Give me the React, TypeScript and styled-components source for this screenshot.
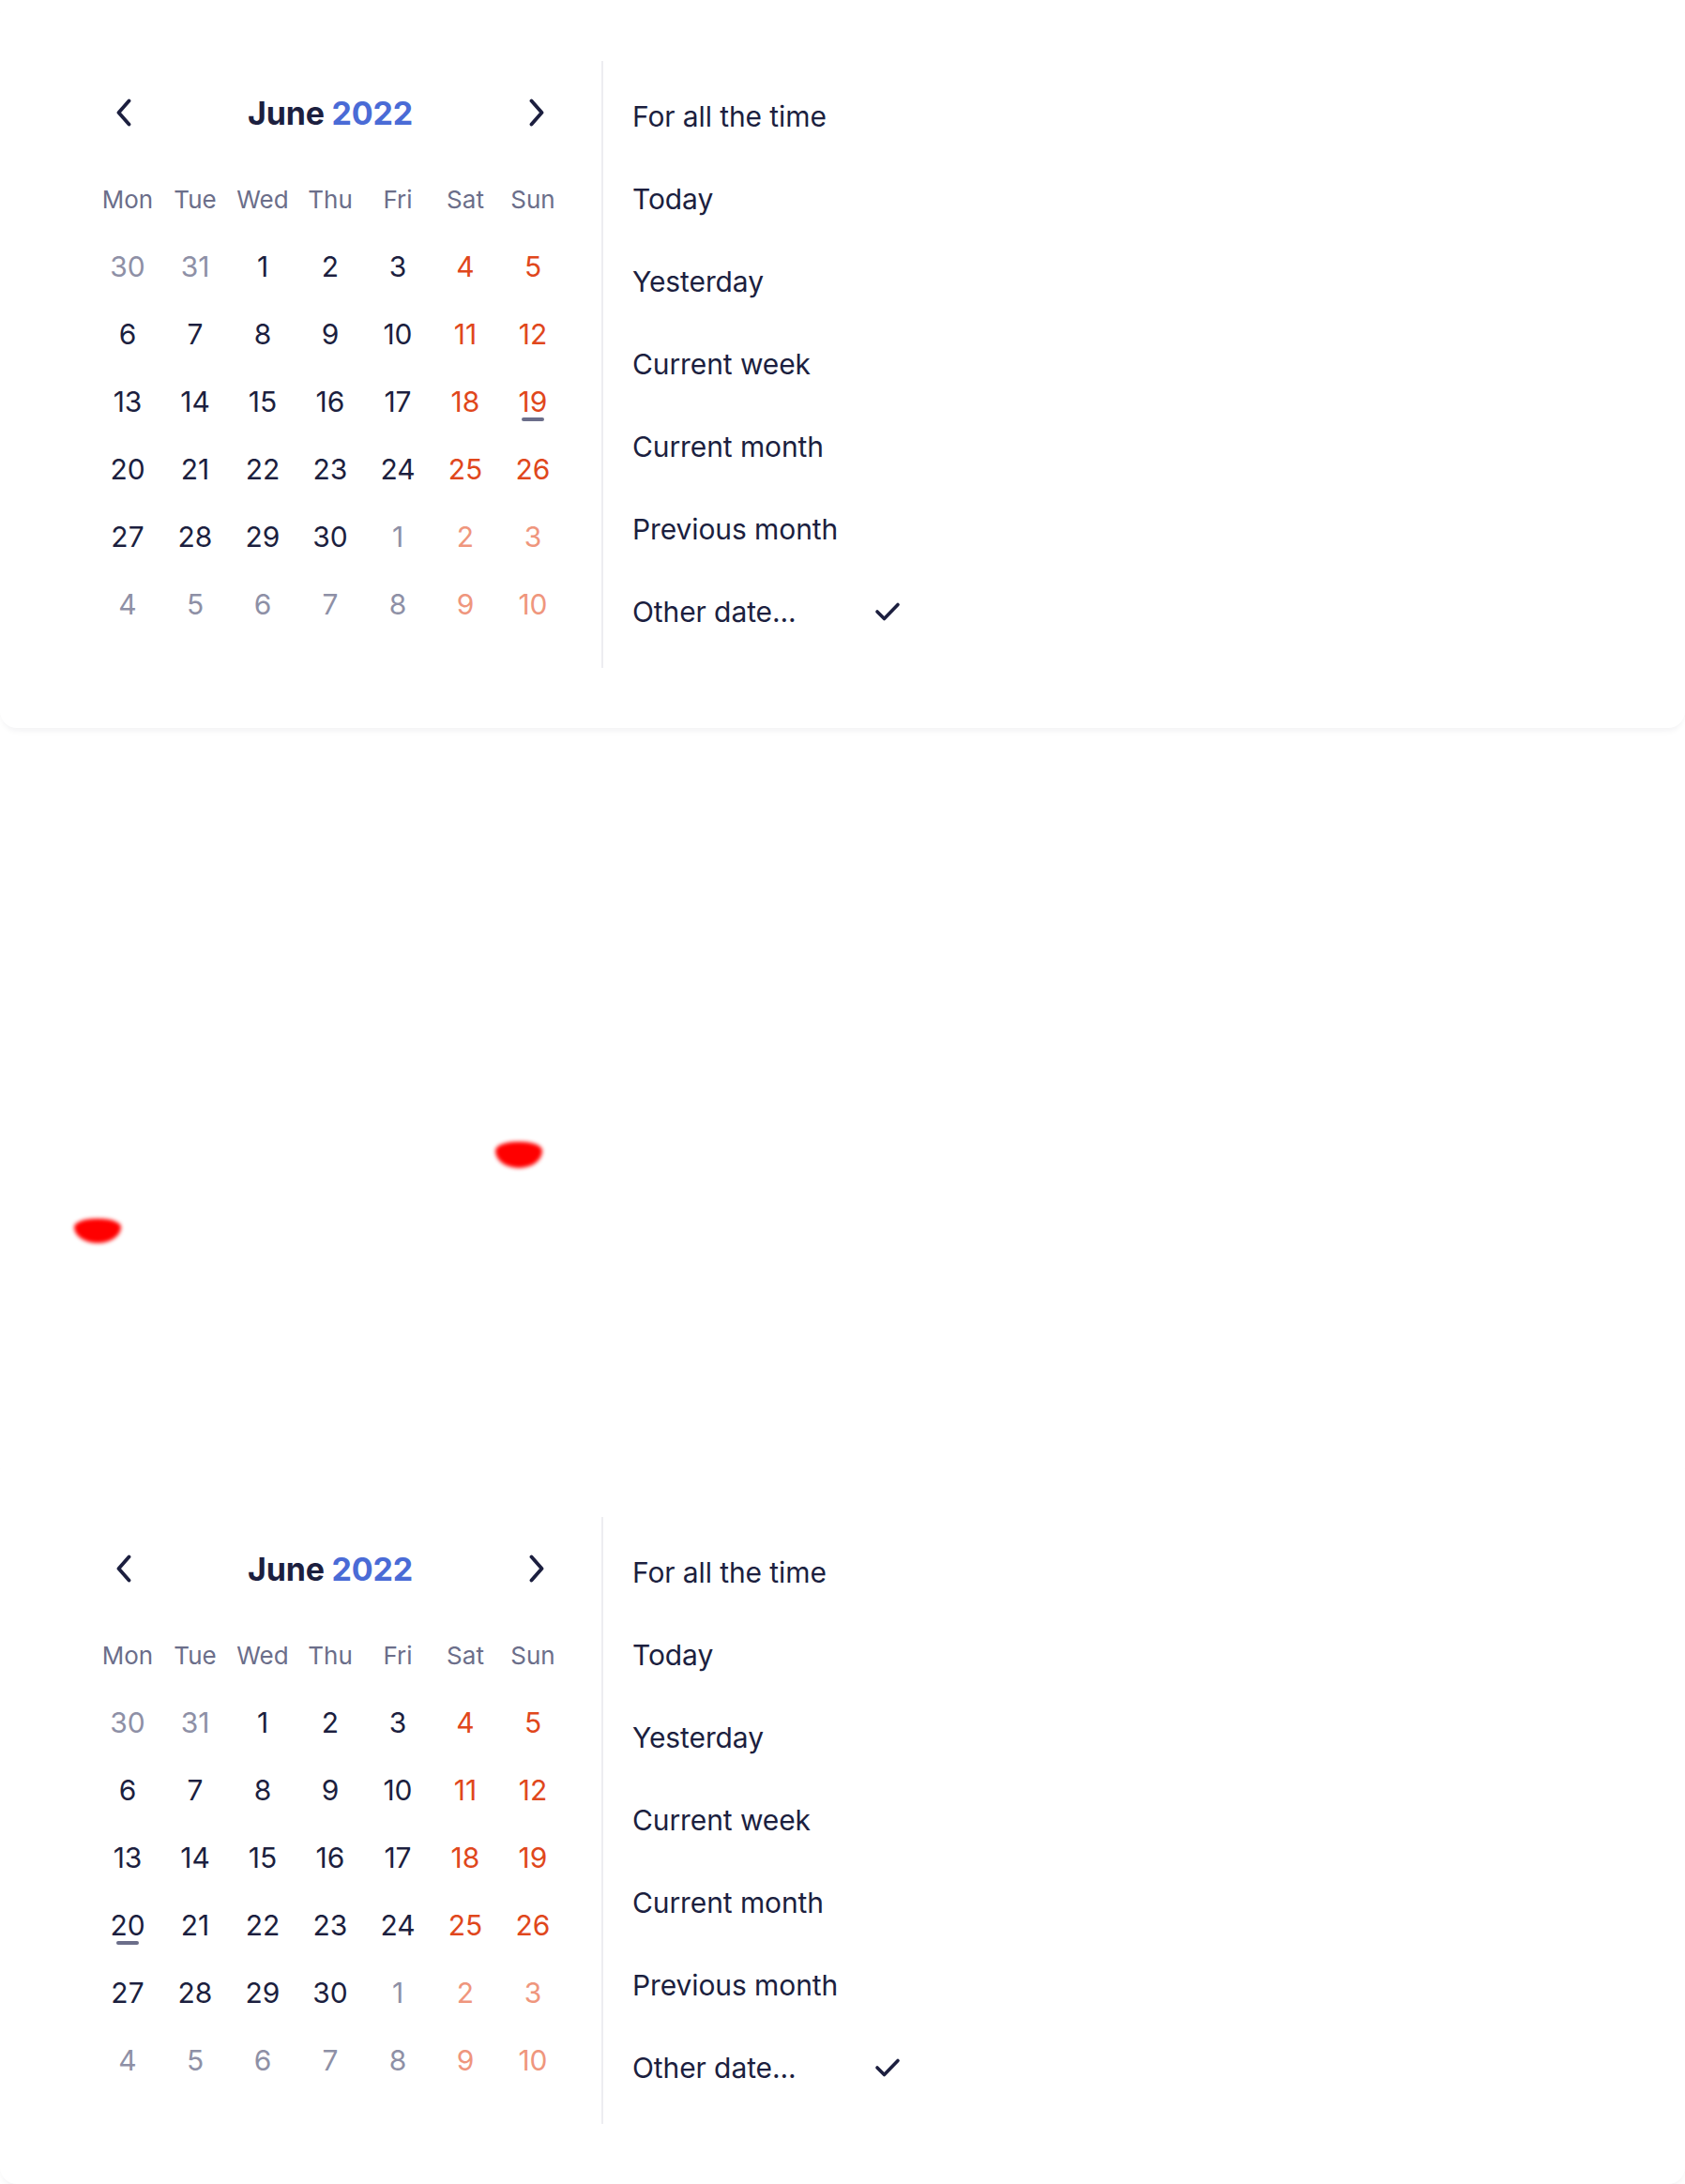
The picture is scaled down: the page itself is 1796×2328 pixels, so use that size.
import React from "react";
import styled, { createGlobalStyle } from "styled-components";

const Global = createGlobalStyle`
  html, body { margin: 0; padding: 0; background: #ffffff; }
  body { font-family: "Inter", "Noto Sans", sans-serif; -webkit-font-smoothing: antialiased; }
  * { box-sizing: border-box; }
`;

const Page = styled.div`
  width: 1796px;
  display: flex;
  flex-direction: column;
`;

const Card = styled.section`
  height: 776px;
  width: 100%;
  background: #ffffff;
  border-radius: 18px;
  box-shadow: 0 5px 7px -3px rgba(30, 30, 50, 0.07);
  display: flex;
  align-items: flex-start;
  padding-left: 100px;
`;

const Calendar = styled.div`
  margin-top: 84px;
  width: 504px;
  display: flex;
  flex-direction: column;
`;

const Header = styled.div`
  height: 72px;
  display: flex;
  align-items: center;
  justify-content: space-between;
  padding: 0 22px 0 22px;
  margin-bottom: 20px;
`;

const NavButton = styled.button`
  border: 0;
  background: transparent;
  padding: 0;
  width: 20px;
  height: 30px;
  display: flex;
  align-items: center;
  justify-content: center;
  cursor: pointer;
`;

const Title = styled.div`
  font-size: 34px;
  font-weight: 700;
  color: #1c1f3f;
  letter-spacing: -0.2px;
`;

const Year = styled.span`
  color: #4a6bd6;
`;

const Grid = styled.div`
  display: grid;
  grid-template-columns: repeat(7, 72px);
  grid-auto-rows: 72px;
`;

const WeekDay = styled.div`
  display: flex;
  align-items: center;
  justify-content: center;
  font-size: 26px;
  color: #6b6e8a;
`;

type Tone = "normal" | "muted" | "weekend" | "mutedWeekend";

const toneColor: Record<Tone, string> = {
  normal: "#1c1f3f",
  muted: "#8e90a6",
  weekend: "#e0471c",
  mutedWeekend: "#ef967d",
};

const Day = styled.div<{ $tone: Tone }>`
  position: relative;
  display: flex;
  align-items: center;
  justify-content: center;
  font-size: 30px;
  color: ${(p) => toneColor[p.$tone]};
`;

const TodayMark = styled.span`
  position: absolute;
  left: 50%;
  top: 53px;
  width: 24px;
  height: 4px;
  margin-left: -12px;
  border-radius: 2px;
  background: #6b6e8a;
`;

const Presets = styled.div`
  margin-left: 37px;
  margin-top: 65px;
  height: 647px;
  border-left: 2px solid #ededf1;
  padding: 15px 0 16px 31px;
  display: flex;
  flex-direction: column;
`;

const Preset = styled.div`
  height: 88px;
  width: 286px;
  display: flex;
  align-items: center;
  justify-content: space-between;
  font-size: 30px;
  color: #1c1f3f;
  letter-spacing: -0.1px;
`;

const Gap = styled.div`
  position: relative;
  height: 776px;
`;

const Blob = styled.div<{ $x: number; $y: number; $w: number; $h: number }>`
  position: absolute;
  left: ${(p) => p.$x}px;
  top: ${(p) => p.$y}px;
  width: ${(p) => p.$w}px;
  height: ${(p) => p.$h}px;
  background: #ff0000;
  border-radius: 45% 45% 50% 50% / 35% 35% 65% 65%;
  filter: blur(2px);
`;

const ChevronLeft = () => (
  <svg width="20" height="30" viewBox="0 0 20 30" fill="none">
    <path d="M15.5 2.5 L4.5 15 L15.5 27.5" stroke="#1c1f3f" strokeWidth="3.8" strokeLinecap="round" strokeLinejoin="round" />
  </svg>
);

const ChevronRight = () => (
  <svg width="20" height="30" viewBox="0 0 20 30" fill="none">
    <path d="M4.5 2.5 L15.5 15 L4.5 27.5" stroke="#1c1f3f" strokeWidth="3.8" strokeLinecap="round" strokeLinejoin="round" />
  </svg>
);

const Check = () => (
  <svg width="28" height="22" viewBox="0 0 28 22" fill="none">
    <path d="M3 11 L10.5 18.5 L25 3.5" stroke="#1c1f3f" strokeWidth="3.6" strokeLinecap="round" strokeLinejoin="round" />
  </svg>
);

const weekDays = ["Mon", "Tue", "Wed", "Thu", "Fri", "Sat", "Sun"];

const weeks: number[][] = [
  [30, 31, 1, 2, 3, 4, 5],
  [6, 7, 8, 9, 10, 11, 12],
  [13, 14, 15, 16, 17, 18, 19],
  [20, 21, 22, 23, 24, 25, 26],
  [27, 28, 29, 30, 1, 2, 3],
  [4, 5, 6, 7, 8, 9, 10],
];

const isOther = (r: number, c: number) =>
  (r === 0 && c < 2) || (r === 4 && c >= 4) || r === 5;

const presets = [
  "For all the time",
  "Today",
  "Yesterday",
  "Current week",
  "Current month",
  "Previous month",
  "Other date...",
];

const Picker: React.FC<{ today: number }> = ({ today }) => (
  <Card>
    <Calendar>
      <Header>
        <NavButton aria-label="Previous month">
          <ChevronLeft />
        </NavButton>
        <Title>
          June <Year>2022</Year>
        </Title>
        <NavButton aria-label="Next month">
          <ChevronRight />
        </NavButton>
      </Header>
      <Grid>
        {weekDays.map((d) => (
          <WeekDay key={d}>{d}</WeekDay>
        ))}
        {weeks.map((row, r) =>
          row.map((d, c) => {
            const other = isOther(r, c);
            const weekend = c >= 5;
            const tone: Tone = other
              ? weekend
                ? "mutedWeekend"
                : "muted"
              : weekend
              ? "weekend"
              : "normal";
            return (
              <Day key={`${r}-${c}`} $tone={tone}>
                {d}
                {!other && d === today && <TodayMark />}
              </Day>
            );
          })
        )}
      </Grid>
    </Calendar>
    <Presets>
      {presets.map((p, i) => (
        <Preset key={p}>
          <span>{p}</span>
          {i === presets.length - 1 && <Check />}
        </Preset>
      ))}
    </Presets>
  </Card>
);

export default function App() {
  return (
    <>
      <Global />
      <Page>
        <Picker today={19} />
        <Gap>
          <Blob $x={528} $y={441} $w={50} $h={28} />
          <Blob $x={79} $y={523} $w={50} $h={26} />
        </Gap>
        <Picker today={20} />
      </Page>
    </>
  );
}
